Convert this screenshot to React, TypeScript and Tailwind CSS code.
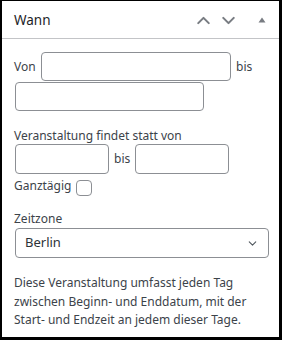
import { ChevronDown, ChevronUp } from "lucide-react";

const font = { fontFamily: '"Noto Sans", "Open Sans", sans-serif' };

function TextInput({ className }: { className: string }) {
  return <div className={`rounded-[4px] border border-[#8c8f94] bg-white ${className}`} />;
}

export default function App() {
  return (
    <div
      style={font}
      className="w-[282px] h-[340px] bg-white border-l-2 border-t border-r-[3px] border-b-[3px] border-black text-[12px] text-[#3c434a] overflow-hidden"
    >
      {/* header */}
      <div className="h-[38px] border-b border-[#c3c4c7] pl-3 pr-[13px] flex items-center">
        <h2 className="text-[13.5px] text-[#1d2327] flex-1 pt-[2px]">Wann</h2>
        <div className="flex items-center text-[#787c82] pt-[1px]">
          <ChevronUp className="w-[21px] h-[21px]" strokeWidth={2.4} />
          <ChevronDown className="w-[21px] h-[21px] ml-[4px]" strokeWidth={2.4} />
          <svg className="ml-[19px]" width="8" height="6" viewBox="0 0 8 6">
            <path d="M4 0.5 L7.5 5.5 L0.5 5.5 Z" fill="#787c82" />
          </svg>
        </div>
      </div>

      <div className="pl-3 pt-[13px]">
        <div className="flex items-center h-[29px]">
          <span className="w-[27px]">Von</span>
          <TextInput className="w-[190px] h-[29px]" />
          <span className="ml-[5px]">bis</span>
        </div>
        <TextInput className="mt-[1px] ml-px w-[189px] h-[29px]" />

        <p className="mt-[16px] leading-[17px]">Veranstaltung findet statt von</p>
        <div className="flex items-center ml-px">
          <TextInput className="w-[94px] h-[30px]" />
          <span className="mx-[5px]">bis</span>
          <TextInput className="w-[94px] h-[30px]" />
        </div>
        <div className="flex items-center h-[20px] mt-[2px]">
          <span>Ganztägig</span>
          <span className="ml-[5px] mt-[3px] w-[16px] h-[16px] rounded-[4px] border border-[#8c8f94] bg-white" />
        </div>

        <p className="mt-[14px] leading-[18px]">Zeitzone</p>
        <div className="ml-px w-[254px] h-[30px] rounded-[4px] border border-[#8c8f94] flex items-center pl-[9px] pr-[9px] text-[13px] text-[#2c3338]">
          <span className="flex-1">Berlin</span>
          <ChevronDown className="w-[13px] h-[13px] text-[#50575e]" strokeWidth={2} />
        </div>

        <p className="mt-[16px] pr-3 leading-[18.5px]">
          Diese Veranstaltung umfasst jeden Tag zwischen Beginn- und Enddatum, mit der Start- und Endzeit an jedem dieser Tage.
        </p>
      </div>
    </div>
  );
}
